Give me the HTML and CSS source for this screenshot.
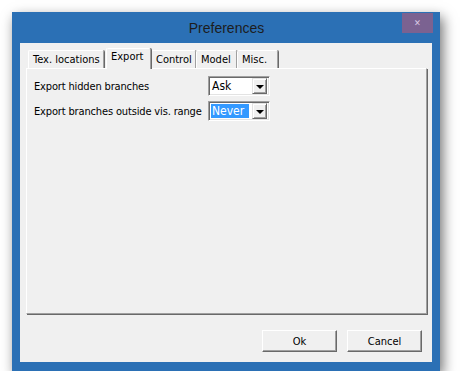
FILE: index.html
```
<!DOCTYPE html>
<html lang="en">
<head>
    <meta charset="UTF-8">
    <title>Preferences</title>
    <link rel="stylesheet" href="styles.css">
</head>
<body>
    <div class="window">
        <div class="titlebar">
            <span class="title">Preferences</span>
            <div class="close">&#x2715;</div>
        </div>
        <div class="client">
            <div class="tabs">
                <div class="tab tab-tex">Tex. locations</div>
                <div class="tab tab-export active">Export</div>
                <div class="tab tab-control">Control</div>
                <div class="tab tab-model">Model</div>
                <div class="tab tab-misc">Misc.</div>
            </div>
            <div class="panel">
                <div class="row">
                    <span class="label">Export hidden branches</span>
                    <div class="combo">
                        <span class="value">Ask</span>
                        <span class="arrow"></span>
                    </div>
                </div>
                <div class="row">
                    <span class="label">Export branches outside vis. range</span>
                    <div class="combo">
                        <span class="value selected">Never</span>
                        <span class="arrow"></span>
                    </div>
                </div>
            </div>
            <div class="buttons">
                <button>Ok</button>
                <button>Cancel</button>
            </div>
        </div>
    </div>
</body>
</html>
```

FILE: styles.css
```
body {
    margin: 0;
    background: #fff;
    font-family: "DejaVu Sans Condensed", "Liberation Sans", sans-serif;
    font-size: 11px;
    color: #000;
}
.window {
    margin: 12px 0 0 12px;
    width: 428px;
    height: 359px;
    background: #2b70b5;
    box-shadow: 3px 5px 12px rgba(0, 0, 0, 0.55);
    display: flex;
    flex-direction: column;
}
.titlebar {
    position: relative;
    height: 31px;
    display: flex;
    justify-content: center;
    align-items: center;
}
.title {
    font-family: "Liberation Sans", Arial, sans-serif;
    font-size: 14px;
    color: #1d1d1d;
    margin-left: 1px;
}
.close {
    position: absolute;
    top: 1px;
    right: 7px;
    width: 31px;
    height: 20px;
    background: #7b6291;
    color: #d9c9e3;
    font-size: 9px;
    display: flex;
    justify-content: center;
    align-items: center;
}
.client {
    margin: 0 8px;
    height: 319px;
    background: #f0f0f0;
    display: flex;
    flex-direction: column;
}
.tabs {
    display: flex;
    align-items: flex-end;
    height: 25px;
    padding-left: 8px;
}
.tab {
    height: 18px;
    box-sizing: border-box;
    padding: 2px 0 0 4px;
    border-top: 1px solid #fff;
    border-left: 1px solid #fff;
    border-right: 1px solid #a0a0a0;
    border-radius: 2px 2px 0 0;
    white-space: nowrap;
    position: relative;
    box-shadow: 1px 0 0 #696969;
}
.tab-tex { width: 76px; }
.tab-export { width: 45px; }
.tab-control { width: 45px; }
.tab-model { width: 41px; }
.tab-misc { width: 41px; }
.tab.active {
    height: 21px;
    margin: 0 0 -1px 2px;
    padding: 1px 0 0 4px;
    background: #f0f0f0;
    z-index: 2;
}
.panel {
    margin: 0 5px 0 6px;
    height: 246px;
    box-sizing: border-box;
    border-top: 1px solid #fff;
    border-left: 1px solid #fff;
    border-right: 1px solid #a0a0a0;
    border-bottom: 1px solid #a0a0a0;
    box-shadow: 1px 1px 0 #696969;
    padding: 7px 0 0 7px;
    display: flex;
    flex-direction: column;
    gap: 5px;
}
.row {
    display: flex;
    align-items: center;
}
.label {
    width: 174px;
    letter-spacing: -0.15px;
}
.combo {
    width: 62px;
    height: 20px;
    box-sizing: border-box;
    background: #fff;
    border-top: 1px solid #a0a0a0;
    border-left: 1px solid #a0a0a0;
    border-right: 1px solid #fff;
    border-bottom: 1px solid #fff;
    box-shadow: inset 1px 1px 0 #696969, inset -1px -1px 0 #e3e3e3;
    display: flex;
    align-items: center;
    padding: 2px;
    font-size: 12px;
}
.value {
    flex: 1;
    height: 14px;
    line-height: 14px;
    padding-left: 1px;
    margin-right: 3px;
}
.value.selected {
    background: #3399ff;
    color: #fff;
}
.arrow {
    width: 15px;
    height: 16px;
    box-sizing: border-box;
    background: #f0f0f0;
    border-top: 1px solid #e3e3e3;
    border-left: 1px solid #e3e3e3;
    border-right: 1px solid #696969;
    border-bottom: 1px solid #696969;
    box-shadow: inset 1px 1px 0 #fff, inset -1px -1px 0 #a0a0a0;
    display: flex;
    justify-content: center;
    align-items: center;
}
.arrow::after {
    content: "";
    border-left: 4px solid transparent;
    border-right: 4px solid transparent;
    border-top: 4px solid #000;
    margin-top: 1px;
}
.buttons {
    display: flex;
    justify-content: flex-end;
    gap: 10px;
    padding: 16px 10px 0 0;
}
button {
    width: 75px;
    height: 22px;
    background: #f0f0f0;
    font-family: "DejaVu Sans Condensed", "Liberation Sans", sans-serif;
    font-size: 11px;
    color: #000;
    border-top: 1px solid #fff;
    border-left: 1px solid #fff;
    border-right: 1px solid #696969;
    border-bottom: 1px solid #696969;
    box-shadow: inset -1px -1px 0 #a0a0a0;
    padding: 0;
}
```
